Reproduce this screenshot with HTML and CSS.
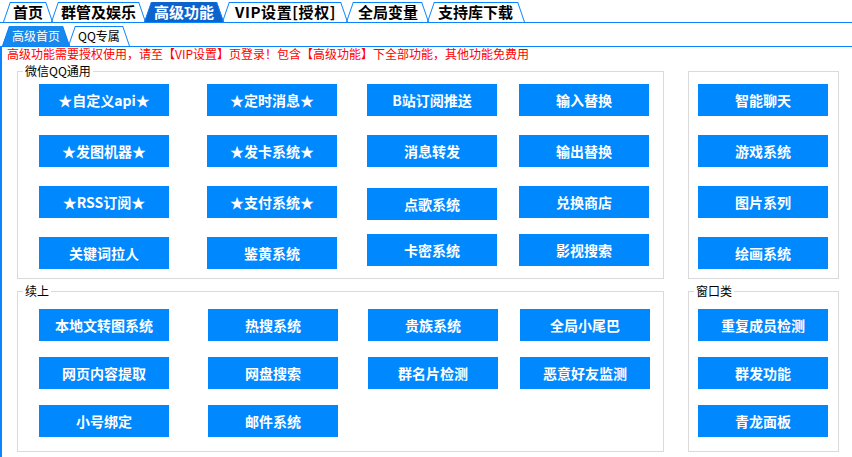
FILE: index.html
```html
<!DOCTYPE html>
<html lang="zh-CN">
<head>
<meta charset="utf-8">
<title>高级功能</title>
<link rel="stylesheet" href="styles.css">
</head>
<body>
<div class="tabs tabs-main">
  <div class="tab">首页</div>
  <div class="tab">群管及娱乐</div>
  <div class="tab sel">高级功能</div>
  <div class="tab tab-wide">VIP设置[授权]</div>
  <div class="tab">全局变量</div>
  <div class="tab">支持库下载</div>
</div>
<div class="tabs tabs-sub">
  <div class="tab sel">高级首页</div>
  <div class="tab">QQ专属</div>
</div>
<div class="panel">
  <div class="notice">高级功能需要授权使用，请至【VIP设置】页登录！包含【高级功能】下全部功能，其他功能免费用</div>
  <div class="row row-a">
    <div class="group group-main">
      <span class="group-label">微信QQ通用</span>
      <div class="grid grid-a">
        <div class="btn">★自定义api★</div>
        <div class="btn">★定时消息★</div>
        <div class="btn">B站订阅推送</div>
        <div class="btn">输入替换</div>
        <div class="btn">★发图机器★</div>
        <div class="btn">★发卡系统★</div>
        <div class="btn">消息转发</div>
        <div class="btn">输出替换</div>
        <div class="btn">★RSS订阅★</div>
        <div class="btn">★支付系统★</div>
        <div class="btn down">点歌系统</div>
        <div class="btn">兑换商店</div>
        <div class="btn">关键词拉人</div>
        <div class="btn">鉴黄系统</div>
        <div class="btn up">卡密系统</div>
        <div class="btn up">影视搜索</div>
      </div>
    </div>
    <div class="group group-side">
      <div class="grid grid-side-a">
        <div class="btn">智能聊天</div>
        <div class="btn">游戏系统</div>
        <div class="btn">图片系列</div>
        <div class="btn">绘画系统</div>
      </div>
    </div>
  </div>
  <div class="row row-b">
    <div class="group group-main">
      <span class="group-label">续上</span>
      <div class="grid grid-b">
        <div class="btn">本地文转图系统</div>
        <div class="btn">热搜系统</div>
        <div class="btn">贵族系统</div>
        <div class="btn">全局小尾巴</div>
        <div class="btn">网页内容提取</div>
        <div class="btn">网盘搜索</div>
        <div class="btn">群名片检测</div>
        <div class="btn">恶意好友监测</div>
        <div class="btn">小号绑定</div>
        <div class="btn">邮件系统</div>
      </div>
    </div>
    <div class="group group-side">
      <span class="group-label">窗口类</span>
      <div class="grid grid-side-b">
        <div class="btn">重复成员检测</div>
        <div class="btn">群发功能</div>
        <div class="btn">青龙面板</div>
      </div>
    </div>
  </div>
</div>
</body>
</html>
```
FILE: styles.css
```css
* { box-sizing: border-box; }
html, body { margin: 0; padding: 0; }
body {
  width: 852px;
  height: 457px;
  overflow: hidden;
  background: #fff;
  font-family: "Noto Sans CJK SC", "Noto Sans", sans-serif;
  font-size: 12px;
  color: #000;
  display: flex;
  flex-direction: column;
}

/* ---------- tabs ---------- */
.tabs {
  display: flex;
  align-items: flex-end;
  border-bottom: 1px solid #0a84ff;
}
.tabs-main { padding: 2px 0 0 3px; }
.tabs-sub { padding: 3px 0 0 2px; }

.tab {
  position: relative;
  height: 20px;
  line-height: 20px;
  padding: 0 10px;
  margin-left: -2px;
  white-space: nowrap;
  background: linear-gradient(#0a84ff, #0a84ff) no-repeat 7px 0 / calc(100% - 14px) 1px;
}
.tab:first-child { margin-left: 0; }
.tab::before,
.tab::after {
  content: "";
  position: absolute;
  bottom: 0;
  width: 1px;
  height: 100%;
  background: #0a84ff;
  transform-origin: bottom;
}
.tab::before { left: 0; transform: skewX(-19deg); }
.tab::after { right: 0; transform: skewX(19deg); }

.tab.sel {
  color: #fff;
  clip-path: polygon(7px 0, calc(100% - 7px) 0, 100% 100%, 0 100%);
}
.tabs-main .tab { font-size: 15px; font-weight: 700; }
.tabs-main .tab.sel { background: #0d63cc; }
.tabs-main .tab-wide { padding: 0 12px 0 13px; letter-spacing: 0.6px; }
.tabs-main .tab:nth-child(5) { padding: 0 11px 0 12px; }
.tabs-main .tab:last-child { padding: 0 12px 0 11px; }
.tabs-sub .tab { font-size: 12px; }
.tabs-sub .tab.sel { background: #1788ee; }

/* ---------- panel ---------- */
.panel {
  flex: 1;
  border-left: 2px solid #0a84ff;
  padding-left: 15px;
}
.notice {
  margin-left: -10px;
  line-height: 14px;
  color: #ff0000;
  white-space: nowrap;
}

.row {
  display: flex;
  gap: 24px;
}
.row-a { margin-top: 10px; }
.row-b { margin-top: 12px; }

.group {
  position: relative;
  border: 1px solid #dadada;
}
.group-main { width: 647px; padding-left: 21px; }
.group-side { width: 151px; padding-left: 9px; }
.row-a .group { padding-top: 12px; padding-bottom: 9px; }
.row-b .group { padding-top: 17px; padding-bottom: 14px; }

.group-label {
  position: absolute;
  top: -8px;
  left: 5px;
  padding: 0 2px;
  line-height: 14px;
  background: #fff;
  white-space: nowrap;
}

.grid {
  display: grid;
  grid-auto-rows: 32px;
  align-items: start;
}
.grid-a { grid-template-columns: 168px 160px 152px 130px; row-gap: 19px; }
.grid-b { grid-template-columns: 169px 160px 152px 130px; row-gap: 16px; }
.grid-side-a { grid-template-columns: 130px; row-gap: 19px; }
.grid-side-b { grid-template-columns: 130px; row-gap: 16px; }

.btn {
  width: 130px;
  height: 32px;
  line-height: 32px;
  background: #0088ff;
  color: #fff;
  font-size: 14px;
  font-weight: 700;
  text-align: center;
  white-space: nowrap;
}
.btn.down { margin-top: 2px; }
.btn.up { margin-top: -3px; }
```
